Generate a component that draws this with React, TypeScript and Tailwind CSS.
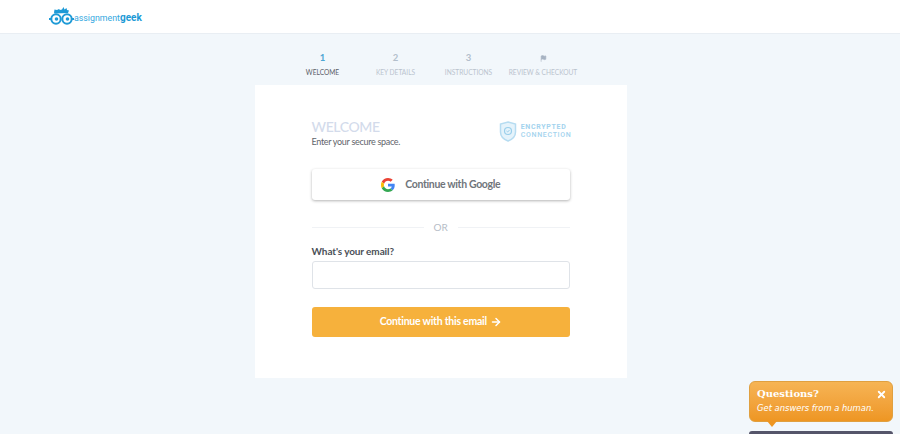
import type { ReactNode } from "react";
import { ArrowRight, Flag, X } from "lucide-react";

const font = { fontFamily: "Lato, sans-serif" };

function Logo() {
  return (
    <div className="flex items-end h-[18px]">
      <svg width="25" height="18" viewBox="0 0 25 18">
        <path d="M5 5.5 L5.500 2.500 L8 3 L10 2 L11 3 L13 2.500 L14.500 0 L15.500 2.500 L17.500 1 L18 3 L20 3.500 L19 6 L5.500 6.500 Z" fill="#1e9ad6" />
        <circle cx="7" cy="12" r="4.700" fill="#fff" stroke="#1e9ad6" strokeWidth="2" />
        <circle cx="18" cy="12" r="4.700" fill="#fff" stroke="#1e9ad6" strokeWidth="2" />
        <circle cx="7.500" cy="12" r="1.800" fill="#1e9ad6" />
        <circle cx="18.500" cy="12" r="1.800" fill="#1e9ad6" />
        <rect x="0" y="11" width="2" height="2" fill="#1e9ad6" />
        <rect x="23" y="11" width="2" height="2" fill="#1e9ad6" />
      </svg>
      <span className="text-[8.8px] leading-[13px] text-[#35a8e0]" style={{ fontFamily: "Roboto, sans-serif" }}>
        assignment<span className="font-bold text-[#1e9ad6] text-[10px]">geek</span>
      </span>
    </div>
  );
}

function Step({ n, label, active, w }: { n: ReactNode; label: string; active?: boolean; w: string }) {
  return (
    <div className={`flex flex-col items-center ${w}`}>
      <div className={`h-[14px] flex items-center text-[9.5px] font-bold ${active ? "text-[#4ba6d3]" : "text-[#b3bfcc]"}`}>{n}</div>
      <div className={`mt-[1px] whitespace-nowrap text-[6.6px] leading-[12px] ${active ? "text-[#5b6068]" : "text-[#bac3ce]"}`}>{label}</div>
    </div>
  );
}

function GoogleIcon() {
  return (
    <svg width="14" height="14" viewBox="0 0 48 48">
      <path fill="#EA4335" d="M24 9.5c3.5 0 6.700 1.200 9.200 3.600l6.900-6.900C35.900 2.400 30.500 0 24 0 14.600 0 6.500 5.400 2.600 13.200l8 6.200C12.500 13.700 17.800 9.500 24 9.500z" />
      <path fill="#4285F4" d="M47 24.500c0-1.600-.1-3.100-.4-4.500H24v9h12.900c-.6 3-2.200 5.500-4.700 7.200l7.700 6C44.400 37.900 47 31.800 47 24.500z" />
      <path fill="#FBBC05" d="M10.600 28.600c-.5-1.400-.8-3-.8-4.600s.3-3.200.8-4.600l-8-6.200C.9 16.500 0 20.100 0 24s.9 7.500 2.600 10.800l8-6.200z" />
      <path fill="#34A853" d="M24 48c6.500 0 11.900-2.100 15.900-5.800l-7.700-6c-2.200 1.500-4.900 2.300-8.200 2.300-6.200 0-11.500-4.200-13.400-9.900l-8 6.200C6.500 42.600 14.600 48 24 48z" />
    </svg>
  );
}

export default function App() {
  return (
    <div className="relative h-[434px] w-[900px] overflow-hidden bg-[#f2f7fb]" style={font}>
      <header className="h-[34px] bg-white border-b border-[#e9eef3] pl-[49px] pt-[7px]">
        <Logo />
      </header>

      <div className="relative ml-[286px] mt-[17px] flex w-[295px]">
        <Step n="1" label="WELCOME" active w="w-[73px]" />
        <Step n="2" label="KEY DETAILS" w="w-[73px]" />
        <Step n="3" label="INSTRUCTIONS" w="w-[73px]" />
        <Step n={<Flag size={7} fill="#a7b3c2" stroke="#a7b3c2" />} label="REVIEW & CHECKOUT" w="w-[76px]" />
      </div>

      <main className="ml-[255px] mt-[7px] h-[293px] w-[372px] bg-white pl-[56.5px] pr-[57px] pt-[33px]">
        <div className="flex justify-between h-[31px]">
          <div>
            <h1 className="text-[14px] leading-[18px] font-medium tracking-[-0.4px] text-[#d3dbeb]">WELCOME</h1>
            <p className="-mt-[1px] text-[9px] tracking-[-0.3px] leading-[14px] text-[#5f646b]">Enter your secure space.</p>
          </div>
          <div className="flex items-start -mr-[1.5px]">
            <svg width="18" height="21" viewBox="0 0 18 21" className="mt-[3px]">
              <path d="M9 1 L16.500 3 V11 C16.500 15.500 13 18.500 9 20 C5 18.500 1.500 15.500 1.500 11 V3 Z" fill="#e5f3fb" stroke="#b6dcf1" strokeWidth="1.500" />
              <circle cx="9" cy="10" r="3.500" fill="none" stroke="#9bcfeb" strokeWidth="1.200" />
              <path d="M7.500 10 L8.700 11 L10.500 9" fill="none" stroke="#9bcfeb" strokeWidth="1" />
            </svg>
            <div className="ml-[4px] mt-[5px] text-[7px] leading-[8px] font-bold tracking-[0.7px] text-[#a3d3ee]" style={{ fontFamily: "Roboto, sans-serif" }}>
              <div>ENCRYPTED</div>
              <div className="font-medium">CONNECTION</div>
            </div>
          </div>
        </div>

        <button className="mt-[20px] flex h-[31px] w-[258.500px] items-center justify-center gap-[10px] rounded-[3px] bg-white text-[10.5px] font-bold tracking-[-0.35px] text-[#70757b] shadow-[0_1px_3px_rgba(0,0,0,0.3)]">
          <GoogleIcon />
          <span>Continue with Google</span>
        </button>

        <div className="mt-[20px] flex h-[14px] items-center">
          <div className="h-px flex-1 bg-[#f0f2f5]" />
          <span className="px-[10px] text-[10px] text-[#b6bdc7]">OR</span>
          <div className="h-px flex-1 bg-[#f0f2f5]" />
        </div>

        <label className="mt-[10px] block text-[10px] tracking-[-0.1px] leading-[14px] font-bold text-[#4a4f57]">What's your email?</label>
        <div className="mt-[3px] h-[28px] w-[258.500px] rounded-[3px] border border-[#dfe3e8] bg-white" />

        <button className="mt-[17.500px] flex h-[30px] w-[258.500px] items-center justify-center gap-[3px] rounded-[3px] bg-[#f6b13c] text-[10.5px] font-bold tracking-[-0.25px] text-white">
          Continue with this email
          <ArrowRight size={12} strokeWidth={3} />
        </button>
      </main>

      <div className="absolute left-[749px] top-[381px] h-[41px] w-[144px] rounded-[6px] border border-[#e0a040] bg-gradient-to-b from-[#f6b454] to-[#ee9622] pl-[7px] pr-[5px] pt-[4px] text-white" style={{ fontFamily: '"DejaVu Sans", sans-serif' }}>
        <div className="flex items-center justify-between">
          <span className="text-[10px] leading-[16px] font-bold" style={{ fontFamily: '"DejaVu Serif", serif' }}>Questions?</span>
          <X size={11} strokeWidth={4} />
        </div>
        <div className="text-[8.4px] leading-[13px] italic whitespace-nowrap">Get answers from a human.</div>
        <div className="absolute left-[17px] top-[39px] h-0 w-0 border-x-[5px] border-t-[6px] border-x-transparent border-t-[#ee9622]" />
      </div>
      <div className="absolute left-[749px] top-[431px] h-[3px] w-[144px] rounded-t-[3px] bg-[#55556a]" />
    </div>
  );
}
